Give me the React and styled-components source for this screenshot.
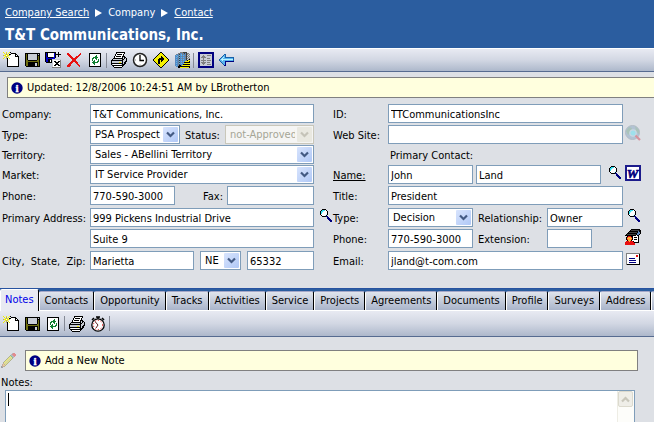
import React from 'react';
import styled, { createGlobalStyle, css } from 'styled-components';

const blue = '#2b5d9f';
const surface = '#dde0e5';
const fieldBorder = '#7f9db9';
const fontStack = '"DejaVu Sans Condensed", "DejaVu Sans", sans-serif';

const Global = createGlobalStyle`
  *, *::before, *::after { box-sizing: border-box; }
  body { margin: 0; background: ${surface}; }
  body, button, input, select, textarea {
    font-family: ${fontStack};
    font-size: 11px;
    line-height: 14px;
    color: #000;
  }
  a { color: inherit; }
`;

/* ---------- icons ---------- */

const palette = {
  K: '#000', W: '#fff', Y: '#f4f000', y: '#b8b060', O: '#6f6f10', G: '#808080', L: '#c8ccd4',
  B: '#0000c8', N: '#000080', C: '#30e0f0', c: '#b8f4ff', R: '#e81010', E: '#108030', S: '#5888c0',
  D: '#404040', T: '#a06030', F: '#ffb030', A: '#58b4f0', P: '#1860a8',
};

function Pixels({ rows, faded }) {
  const cells = [];
  rows.forEach((row, y) => {
    let x = 0;
    while (x < row.length) {
      let end = x + 1;
      while (end < row.length && row[end] === row[x]) end += 1;
      if (row[x] !== '.') {
        cells.push(<rect key={`${x}-${y}`} x={x} y={y} width={end - x} height={1} fill={palette[row[x]]} />);
      }
      x = end;
    }
  });
  return (
    <svg width="16" height="16" viewBox="0 0 16 16" shapeRendering="crispEdges" opacity={faded ? 0.4 : 1} aria-hidden="true">
      {cells}
    </svg>
  );
}

const art = {
  create: [
    'Y..Y..YK........',
    '.Y.y.Y..KKKKK...',
    '..YyY.KKWWWWKK..',
    'yYYWYYyWWWWWKWK.',
    '..YyY.WWWWWWKKKK',
    '.Y.y.YWWWWWWWWWK',
    'Y..yKWYWWWWWWWWK',
    '....KWWWWWWWWWWK',
    '....KWWWWWWWWWWK',
    '....KWWWWWWWWWWK',
    '....KWWWWWWWWWWK',
    '....KWWWWWWWWWWK',
    '....KWWWWWWWWWWK',
    '....KWWWWWWWWWWK',
    '....KKKKKKKKKKKK',
  ],
  save: [
    '................',
    '.KKKKKKKKKKKKKKK',
    '.KOKLLLLLLLLLKLK',
    '.KOKLLLLLLLLLKKK',
    '.KOKLLLLLLLLLKOK',
    '.KOKLLLLLLLLLKOK',
    '.KOKLLLLLLLLLKOK',
    '.KOKLLLLLLLLLKOK',
    '.KOOKKKKKKKKKOOK',
    '.KOOOOOOOOOOOOOK',
    '.KOOKKKKKKKKKKOK',
    '.KOOKKKKKKKLLKOK',
    '.KOOKKKKKKKLLKOK',
    '.KOOKKKKKKKLLKOK',
    '..KKKKKKKKKKKKKK',
  ],
  saveClose: [
    'KKKKKKKKKKK..K..',
    'KBKWWWWWWBK..K..',
    'KBKWWWWWWBKKKKKK',
    'KBKWWWWWWBK..K..',
    'KBKWWWWWWBK..K..',
    'KBBKKKKKBBK.....',
    'KBBBBBBBBB......',
    'KBBKKKKLLLLLLLLL',
    'KBBKKWKLWWWWWWWG',
    'KBBKKWKLWKKWWKKG',
    '.KKKKKKLWWKKKKWG',
    '.......LWWWKKWWG',
    '.......LWWKKKKWG',
    '.......LWKKWWKKG',
    '.......LWWWWWWWG',
    '.......GGGGGGGGG',
  ],
  remove: [
    '................',
    '.RR...........R.',
    '.RRR.........RR.',
    '..RRR.......RR..',
    '...RRR....RRR...',
    '....RRR..RRR....',
    '.....RRRRRR.....',
    '......RRRR......',
    '......RRRR......',
    '.....RRRRRR.....',
    '....RRR..RRR....',
    '...RRR....RR....',
    '..RRR......RR...',
    '.RRRR.......RR..',
    '.RRR.........R..',
  ],
  refresh: [
    '................',
    '..KKKKKKKKKKKK..',
    '..KWWWWWWWWWWK..',
    '..KWWWWWWEWWWK..',
    '..KWWWWWEEWWWK..',
    '..KWWWEEEEEWWK..',
    '..KWWEEWEEWWWK..',
    '..KWWEWWWEWEWK..',
    '..KWWEWEWWWEWK..',
    '..KWWWEEWWEEWK..',
    '..KWWEEEEEEWWK..',
    '..KWWWEEWWWWWK..',
    '..KWWWWEWWWWWK..',
    '..KWWWWWWWWWWK..',
    '..KKKKKKKKKKKK..',
  ],
  print: [
    '.....KKKKKKKKK..',
    '.....KWWWWWWWK..',
    '....KWKKKKKWK...',
    '....KWWWWWWWK...',
    '...KWKKKKKWKKK..',
    '...KWWWWWWWKLKK.',
    '..KKKKKKKKKKLKLK',
    '.KLLLLLLLLLKKLLK',
    'KKKKKKKKKKKKLLLK',
    'KLLLLLLLLLLKLLKK',
    'KLLLLLLLYYLKLKK.',
    'KKKKKKKKKKKKLKK.',
    'KLWWWWWWWWLKKK..',
    '.KKKKKKKKKKKK...',
    '..KWWWWWWWWK....',
    '...KKKKKKKK.....',
  ],
  direction: [
    '.......KK.......',
    '......KYYK......',
    '.....KYYYYK.....',
    '....KYYYYYYK....',
    '...KYYYYKYYYK...',
    '..KYYYYYKKYYYK..',
    '.KYYYYKKKKKYYYK.',
    'KYYYYKKKKKKYYYYK',
    'KYYYYKKYKKYYYYYK',
    '.KYYYKKYKYYYYYK.',
    '..KYYKKYYYYYYK..',
    '...KYKKYYYYYK...',
    '....KYYYYYYK....',
    '.....KYYYYK.....',
    '......KYYK......',
    '.......KK.......',
  ],
  building: [
    '......GGGDDDD...',
    '....GGSSGSDSDGG.',
    '..GSSDSAGSGSDGLG',
    '.SASGASASASSDLGL',
    '.SSASDSSGSSGDGLG',
    '.SASGASASASSDLGL',
    '.SSSSDSSGSSGDGLG',
    '.SASGASASASSDLGK',
    '.SSSSDSSGSSSGKYY',
    '.SASGASASASYYYYK',
    '.SSSSDSSGSKKKKKK',
    '.SASGASASAYYYYYY',
    '.SSSSDSSSKKKKKKK',
    '.SASGKKSYYYYYYYY',
    '..SSKKKKKKKKKKKK',
    '....KKYYYYYYYYYK',
  ],
  layout: [
    'NNNNNNNNNNNNNNNN',
    'NNNNNNNNNNNNNNNN',
    'NNLLLLLLLLLLLLNN',
    'NNLLLGLLLGGGGLNN',
    'NNLLGGGLLLLLLLNN',
    'NNLGGGGGLLLLLLNN',
    'NNLLLGLLLGGGLLNN',
    'NNLLLGLLLLLLLLNN',
    'NNLGGGGGLGGGGLNN',
    'NNLLLGLLLLLLLLNN',
    'NNLGGGGGLGGGLLNN',
    'NNLLGGGLLLLLLLNN',
    'NNLLLGLLLGGGGLNN',
    'NNLLLLLLLLLLLLNN',
    'NNNNNNNNNNNNNNNN',
    'NNNNNNNNNNNNNNNN',
  ],
  back: [
    '................',
    '................',
    '.....PP.........',
    '....PAP.........',
    '...PAAP.........',
    '..PAcAPPPPPPPPP.',
    '.PAcAAAAAAAAAAP.',
    'PAccccccccccccP.',
    'PAAcAAAAAAAAAAP.',
    '.PAAAANNNNNNNNN.',
    '..PAAAN.........',
    '...PAAN.........',
    '....PAN.........',
    '.....NN.........',
  ],
  search: [
    '................',
    '.....KKKK.......',
    '....KCCCWK......',
    '...KCCcWWWK.....',
    '...KCcWWWWK.....',
    '...KCWWWWWK.....',
    '...KWWWWWcK.....',
    '....KWWWcK......',
    '.....KKKKNN.....',
    '..........NN....',
    '..........NNN...',
    '...........NNN..',
    '............NNN.',
    '.............NN.',
  ],
  card: [
    '......KKKKKKKKK.',
    '.....KDDDDDDDDKK',
    '....KKKKKKKKKSKK',
    '...KDDDDDDDDKSSK',
    '..KKKKKKKKKKSSSK',
    '.KDDDDDDDDDKSSK.',
    'KKKKKKKKKKKWKK..',
    '..KRRRKKWWWWWK..',
    '.KRFFFRKWKKKWK..',
    '.KFFFFFKWWWWWK..',
    '.KRFFFRKWKKKWK..',
    '..KFFFKWWWWWWK..',
    '.RRRFRRRKWWWWK..',
    'RRRRRRRRRKKKKK..',
    'RRRRRRRRRR......',
    'RRRRRRRRRR......',
  ],
  mail: [
    '................',
    '................',
    '.GGGGGGGGGGGGGG.',
    '.GWWWWWWWWWWWWK.',
    '.GWWWWWWWWWRRWK.',
    '.GWWWWWWWWWRRWK.',
    '.GWWWWWWWWWWWWK.',
    '.GWWNNNNNNWWWWK.',
    '.GWWWWWWWWWWWWK.',
    '.GWWNNNNNNNWWWK.',
    '.GWWWWWWWWWWWWK.',
    '.GWWNNNNNNNWWWK.',
    '.GWWWWWWWWWWWWK.',
    '.GKKKKKKKKKKKKK.',
  ],
  pencil: [
    '...........GRR..',
    '..........GRRRR.',
    '.........EGGRRR.',
    '........OYEGGR..',
    '.......OYYYEG...',
    '......OYYyYO....',
    '.....OYYyYO.....',
    '....OYYyYO......',
    '...OYYyYO.......',
    '..OYYyYO........',
    '..TYyYO.........',
    '.TFTYO..........',
    '.TFFO...........',
    'DTTO............',
    'DD..............',
  ],
};

const Clock = () => (
  <svg width="16" height="16" viewBox="0 0 16 16" aria-hidden="true">
    <circle cx="8" cy="8" r="6.5" fill="#fff" stroke="#222" strokeWidth="1.5" />
    <path d="M8 3v5.5h4" fill="none" stroke="#000" strokeWidth="1.3" />
    <path d="M3 8h1M12 11l.7.7M8 12.5v1M4 11l-.7.7" stroke="#888" />
  </svg>
);

const Stopwatch = () => (
  <svg width="16" height="16" viewBox="0 0 16 16" aria-hidden="true">
    <path d="M6 1h4M8 1v2M2 4l2-2M14 4l-2-2" stroke="#000" strokeWidth="1.6" />
    <circle cx="8" cy="9" r="6.2" fill="#fff" stroke="#000" strokeWidth="1.3" />
    <circle cx="8" cy="9" r="4.6" fill="none" stroke="#e02020" strokeWidth="1" strokeDasharray="1.2 1.8" />
    <path d="M5 5.500l3 3.500M8 9l-2 3" fill="none" stroke="#602020" />
  </svg>
);

const Word = () => (
  <svg width="16" height="16" viewBox="0 0 16 16" aria-hidden="true">
    <rect x="1" y="1" width="14" height="14" fill="#fff" stroke="#1c1c8c" strokeWidth="2" />
    <text x="7.500" y="12.500" textAnchor="middle" fontFamily="Liberation Serif" fontWeight="bold" fontStyle="italic" fontSize="13" fill="#000080" stroke="#000080" strokeWidth=".6">W</text>
  </svg>
);

const Web = () => (
  <svg width="16" height="16" viewBox="0 0 16 16" opacity=".5" aria-hidden="true">
    <circle cx="7.500" cy="7.500" r="7" fill="#88a8c4" stroke="#8898a8" />
    <path d="M1 6l3-4 3 1-1 4-3 3zM10 1l4 4v4l-3-3z" fill="#78a890" />
    <circle cx="8" cy="8" r="3.200" fill="#60e0f4" stroke="#b8d0e0" strokeWidth="1.200" />
    <path d="M10.500 10.500l4.500 4.500" stroke="#d04858" strokeWidth="2.200" />
  </svg>
);

const Info = () => (
  <svg width="12" height="12" viewBox="0 0 12 12" aria-hidden="true">
    <circle cx="6" cy="6" r="5.700" fill="#000080" />
    <text x="6" y="10" textAnchor="middle" fontFamily="Liberation Serif" fontWeight="bold" fontSize="11" fill="#fff" stroke="#fff" strokeWidth=".4">i</text>
  </svg>
);

const Chevron = ({ color }) => (
  <svg width="9" height="7" viewBox="0 0 9 7" aria-hidden="true">
    <path d="M1 1.500l3.500 3.500L8 1.500" fill="none" stroke={color} strokeWidth="2.200" />
  </svg>
);

/* ---------- page parts ---------- */

const Page = styled.div`
  display: flex;
  flex-direction: column;
  min-height: 100vh;
  overflow-x: hidden;
  background: ${surface};
`;

const Header = styled.header`
  padding: 6px 5px 2px;
  background: ${blue};
  color: #fff;
`;

const Breadcrumbs = styled.nav`
  display: flex;
  align-items: center;
  gap: 6px;
`;

const CrumbArrow = styled.span`
  width: 0;
  border: solid transparent;
  border-width: 4px 0 4px 7px;
  border-left-color: #fff;
`;

const Title = styled.h1`
  margin: 5px 0 0;
  font-size: 15px;
  line-height: 21px;
`;

const Toolbar = styled.div`
  display: flex;
  align-items: center;
  height: ${(p) => (p.$top ? 24 : 26)}px;
  padding-left: 1px;
  border-top: ${(p) => (p.$top ? '1px solid #fff' : '0')};
  border-bottom: 1px solid #566b90;
  background: linear-gradient(#e8eaf2, #d2d7e3 50%, #adb8cb);
`;

const ToolButton = styled.button`
  display: flex;
  padding: 0 3px 0 2px;
  border: 0;
  background: none;
`;

const Separator = styled.span`
  width: 1px;
  height: 15px;
  margin-right: 2px;
  background: #858995;
`;

const Notice = styled.div`
  display: flex;
  flex: 1;
  align-items: center;
  gap: 4px;
  height: 21px;
  padding-left: 3px;
  border: 1px solid #808080;
  background: #ffffde;
`;

const UpdatedRow = styled.div`
  display: flex;
  padding: 5px 0 6px 7px;

  ${Notice} { border-right: 0; }
`;

const Form = styled.form`
  display: grid;
  grid-template-columns: 88px minmax(0, 224fr) 19px 55px minmax(0, 235fr) 31px;
  grid-template-rows: 21px 20px 20px 21px 22px 21px 22px 19px;
  align-items: start;
  padding-left: 2px;
  margin-bottom: 18px;
`;

const Label = styled.label`
  line-height: 22px;
  white-space: pre;
  text-decoration: ${(p) => (p.$linked ? 'underline' : 'none')};
`;

const Heading = styled.span`
  padding-left: 2px;
  line-height: 22px;
`;

const Fields = styled.div`
  display: flex;
  align-items: flex-start;
  gap: ${(p) => p.$gap || 0}px;
  min-width: 0;
`;

const sized = css`
  flex: ${(p) => p.$w || 1} ${(p) => p.$w || 1} ${(p) => p.$w || 1}px;
  min-width: 0;
`;

const InlineLabel = styled(Label)`
  ${sized}
  padding: 0 ${(p) => (p.$end ? 4 : 0)}px 0 5px;
  text-align: ${(p) => (p.$end ? 'right' : 'left')};
`;

const Input = styled.input`
  ${sized}
  height: 19px;
  padding: 2px 2px 0;
  border: 1px solid ${fieldBorder};
  border-radius: 0;
  background: #fff;
`;

const Spacer = styled.span`${sized}`;

const SelectBox = styled.span`
  ${sized}
  position: relative;
  display: flex;
`;

const NativeSelect = styled.select`
  width: 100%;
  height: 19px;
  padding: 1px 18px 0 4px;
  border: 1px solid ${fieldBorder};
  border-radius: 0;
  appearance: none;
  background: #fff;

  &:disabled {
    border-color: #c9c7ba;
    background: #f5f5f4;
    color: #a5a596;
    opacity: 1;
  }
`;

const Arrow = styled.span`
  position: absolute;
  top: 2px;
  right: 2px;
  bottom: 2px;
  display: flex;
  align-items: center;
  justify-content: center;
  width: 15px;
  border-radius: 1px;
  background: ${(p) => (p.$off ? '#e9e8e0' : 'linear-gradient(135deg, #d8e4fd, #b0c8f6)')};
  pointer-events: none;
`;

const Select = ({ id, value, w, disabled, label }) => (
  <SelectBox $w={w}>
    <NativeSelect id={id} aria-label={label} disabled={disabled} defaultValue={value}>
      <option>{value}</option>
    </NativeSelect>
    <Arrow $off={disabled}><Chevron color={disabled ? '#c5c3b8' : '#435a83'} /></Arrow>
  </SelectBox>
);

const IconButton = styled.button`
  display: flex;
  justify-self: ${(p) => (p.$end ? 'end' : 'start')};
  margin-left: ${(p) => (p.$end ? 0 : 2)}px;
  padding: 0;
  border: 0;
  background: none;
`;

const LookupButton = styled(IconButton)`
  flex: none;
  width: 17px;
`;

const Tabs = styled.div`
  display: flex;
  align-items: flex-end;
  flex: none;
  height: 23px;
  overflow: hidden;
  border-top: 1px solid #2753a0;
  background: linear-gradient(${blue} 21px, #fff 21px);
`;

const Tab = styled.button`
  flex: none;
  height: 19px;
  margin-bottom: 1px;
  padding: 0 5px;
  border: solid;
  border-width: 1px;
  border-color: #a5a8c8 #000 transparent #fff;
  border-bottom: 0;
  border-radius: 2px 2px 0 0;
  background: linear-gradient(#e0e4ec, #a9b4ca);

  &[aria-selected='true'] {
    height: 22px;
    margin-bottom: 0;
    padding: 0 4px 2px;
    border-color: #fff #000 transparent #fff;
    background: #e8eaf2;
    color: #0000e8;
  }
`;

const TabEdge = styled(Tab).attrs({ as: 'span' })`
  flex: 1;
  min-width: 4px;
  padding: 0;
`;

const NoteRow = styled.div`
  display: flex;
  align-items: center;
  gap: 8px;
  padding: 13px 16px 5px 1px;
`;

const NotesLabel = styled(Label)`
  padding-left: 1px;
  line-height: 14px;
`;

const Editor = styled.div`
  position: relative;
  display: flex;
  flex: 1;
  min-height: 32px;
  margin: 0 19px 0 5px;
`;

const Textarea = styled.textarea`
  flex: 1;
  padding: 2px 20px 0 3px;
  border: 1px solid ${fieldBorder};
  border-bottom: 0;
  border-radius: 0;
  outline: 0;
  resize: none;
  background: #fff;
`;

const Caret = styled.span`
  position: absolute;
  top: 3px;
  left: 3px;
  width: 1px;
  height: 13px;
  background: #000;
`;

const ScrollTrack = styled.div`
  position: absolute;
  top: 1px;
  right: 1px;
  bottom: 0;
  width: 17px;
  border-left: 1px solid #eeede5;
  background: #fdfdfa;
`;

const ScrollUp = styled.button`
  display: flex;
  align-items: center;
  justify-content: center;
  width: 15px;
  height: 16px;
  padding: 0;
  border: 1px solid #dcdace;
  border-radius: 2px;
  background: #efeee8;

  svg { transform: rotate(180deg); }
`;

const mainTools = [
  ['New', 'create'], ['Save', 'save'], ['Save and close', 'saveClose'], ['Delete', 'remove'], ['Refresh', 'refresh'], null,
  ['Print', 'print'], ['History', Clock], ['Directions', 'direction'], ['Company', 'building'], null,
  ['Layout', 'layout'], ['Back', 'back'],
];

const noteTools = [
  ['New note', 'create'], ['Save note', 'save'], ['Refresh notes', 'refresh'], null,
  ['Print notes', 'print'], ['Timer', Stopwatch], null,
];

const Tools = ({ items, top }) => (
  <Toolbar $top={top} role="toolbar">
    {items.map((item, i) => {
      if (!item) return <Separator key={i} />;
      const [name, icon] = item;
      const Drawing = icon;
      return (
        <ToolButton key={name} type="button" aria-label={name}>
          {typeof icon === 'string' ? <Pixels rows={art[icon]} /> : <Drawing />}
        </ToolButton>
      );
    })}
  </Toolbar>
);

const tabNames = ['Notes', 'Contacts', 'Opportunity', 'Tracks', 'Activities', 'Service', 'Projects', 'Agreements', 'Documents', 'Profile', 'Surveys', 'Address'];

export default function App() {
  return (
    <Page>
      <Global />
      <Header>
        <Breadcrumbs aria-label="Breadcrumb">
          <a href="#search">Company Search</a>
          <CrumbArrow />
          <span>Company</span>
          <CrumbArrow />
          <a href="#contact">Contact</a>
        </Breadcrumbs>
        <Title>T&amp;T Communications, Inc.</Title>
      </Header>
      <Tools items={mainTools} top />
      <UpdatedRow>
        <Notice><Info />Updated: 12/8/2006 10:24:51 AM by LBrotherton</Notice>
      </UpdatedRow>

      <Form onSubmit={(e) => e.preventDefault()}>
        <Label htmlFor="company">Company:</Label>
        <Fields><Input id="company" defaultValue="T&T Communications, Inc." /></Fields>
        <span />
        <Label htmlFor="cid">ID:</Label>
        <Fields><Input id="cid" defaultValue="TTCommunicationsInc" /></Fields>
        <span />

        <Label htmlFor="type">Type:</Label>
        <Fields>
          <Select id="type" value="PSA Prospect" w={90} />
          <InlineLabel $w={45} htmlFor="status">Status:</InlineLabel>
          <Select id="status" value="not-Approved" w={89} disabled />
        </Fields>
        <span />
        <Label htmlFor="site">Web Site:</Label>
        <Fields><Input id="site" /></Fields>
        <IconButton type="button" aria-label="Open web site"><Web /></IconButton>

        <Label htmlFor="territory">Territory:</Label>
        <Fields><Select id="territory" value="Sales - ABellini Territory" /></Fields>
        <span />
        <span />
        <Heading>Primary Contact:</Heading>
        <span />

        <Label htmlFor="market">Market:</Label>
        <Fields><Select id="market" value="IT Service Provider" /></Fields>
        <span />
        <Label htmlFor="first" $linked>Name:</Label>
        <Fields $gap={3}>
          <Input id="first" $w={85} defaultValue="John" />
          <Input aria-label="Last name" $w={125} defaultValue="Land" />
          <LookupButton type="button" aria-label="Find contact"><Pixels rows={art.search} /></LookupButton>
        </Fields>
        <IconButton type="button" aria-label="Write letter"><Word /></IconButton>

        <Label htmlFor="phone">Phone:</Label>
        <Fields>
          <Input id="phone" $w={85} defaultValue="770-590-3000" />
          <InlineLabel $w={52} $end htmlFor="fax">Fax:</InlineLabel>
          <Input id="fax" $w={87} />
        </Fields>
        <span />
        <Label htmlFor="jobtitle">Title:</Label>
        <Fields><Input id="jobtitle" defaultValue="President" /></Fields>
        <span />

        <Label htmlFor="address">Primary Address:</Label>
        <Fields><Input id="address" defaultValue="999 Pickens Industrial Drive" /></Fields>
        <IconButton $end type="button" aria-label="Find address"><Pixels rows={art.search} /></IconButton>
        <Label htmlFor="ctype">Type:</Label>
        <Fields>
          <Select id="ctype" value="Decision" w={85} />
          <InlineLabel $w={74} htmlFor="relationship">Relationship:</InlineLabel>
          <Input id="relationship" $w={76} defaultValue="Owner" />
        </Fields>
        <IconButton type="button" aria-label="Find relationship"><Pixels rows={art.search} /></IconButton>

        <span />
        <Fields><Input aria-label="Address line 2" defaultValue="Suite 9" /></Fields>
        <span />
        <Label htmlFor="cphone">Phone:</Label>
        <Fields>
          <Input id="cphone" $w={85} defaultValue="770-590-3000" />
          <InlineLabel $w={74} htmlFor="ext">Extension:</InlineLabel>
          <Input id="ext" $w={45} />
          <Spacer $w={31} />
        </Fields>
        <IconButton type="button" aria-label="Contact cards"><Pixels rows={art.card} /></IconButton>

        <Label htmlFor="city">{'City,  State,  Zip:'}</Label>
        <Fields $gap={6}>
          <Input id="city" $w={104} defaultValue="Marietta" />
          <Select id="state" label="State" value="NE" w={41} />
          <Input aria-label="Zip" $w={67} defaultValue="65332" />
        </Fields>
        <span />
        <Label htmlFor="email">Email:</Label>
        <Fields><Input id="email" defaultValue="jland@t-com.com" /></Fields>
        <IconButton type="button" aria-label="Send email"><Pixels rows={art.mail} /></IconButton>
      </Form>

      <Tabs role="tablist">
        {tabNames.map((name, i) => (
          <Tab key={name} type="button" role="tab" aria-selected={i === 0}>{name}</Tab>
        ))}
        <TabEdge />
      </Tabs>
      <Tools items={noteTools} />
      <NoteRow>
        <Pixels rows={art.pencil} faded />
        <Notice><Info />Add a New Note</Notice>
      </NoteRow>
      <NotesLabel htmlFor="notes">Notes:</NotesLabel>
      <Editor>
        <Textarea id="notes" />
        <Caret />
        <ScrollTrack>
          <ScrollUp type="button" aria-label="Scroll up"><Chevron color="#c9c7bb" /></ScrollUp>
        </ScrollTrack>
      </Editor>
    </Page>
  );
}
